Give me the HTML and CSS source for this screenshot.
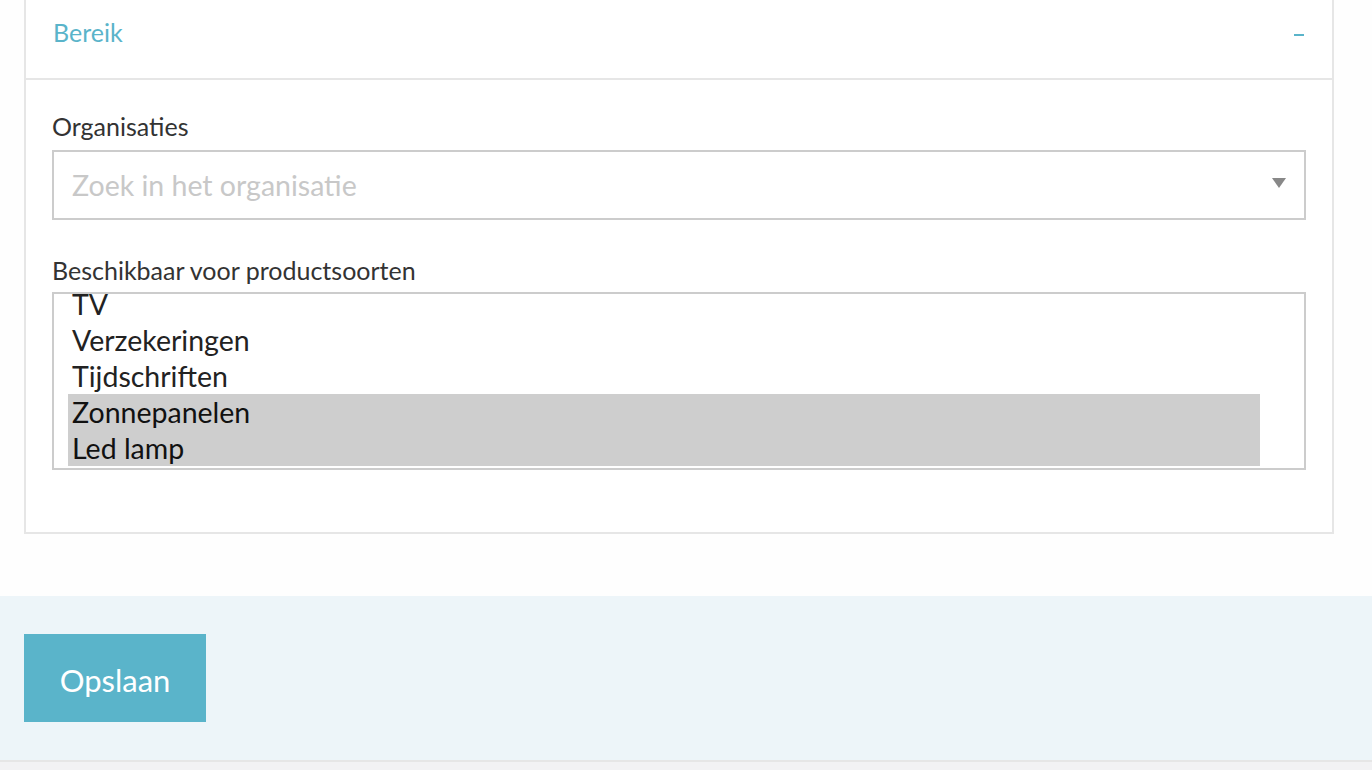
FILE: index.html
```html
<!DOCTYPE html>
<html lang="nl">
<head>
<meta charset="utf-8">
<title>Bereik</title>
<link rel="stylesheet" href="styles.css">
</head>
<body>
<div class="page">
  <section class="panel">
    <div class="panel-header">
      <span class="panel-title">Bereik</span>
      <span class="panel-toggle" aria-hidden="true"></span>
    </div>
    <div class="panel-body">
      <div class="field">
        <label class="field-label">Organisaties</label>
        <div class="select">
          <span class="select-placeholder">Zoek in het organisatie</span>
          <span class="select-arrow"></span>
        </div>
      </div>
      <div class="field">
        <label class="field-label field-label-tight">Beschikbaar voor productsoorten</label>
        <div class="listbox">
          <ul class="listbox-items">
            <li class="option">TV</li>
            <li class="option">Verzekeringen</li>
            <li class="option">Tijdschriften</li>
            <li class="option selected">Zonnepanelen</li>
            <li class="option selected">Led lamp</li>
          </ul>
        </div>
      </div>
    </div>
  </section>
  <div class="actions">
    <button class="btn-save" type="button">Opslaan</button>
  </div>
  <div class="bottom"></div>
</div>
</body>
</html>
```

FILE: styles.css
```css
* { box-sizing: border-box; }
html, body { margin: 0; padding: 0; }
body {
  background: #fefefe;
  font-family: Lato, "Open Sans", "Liberation Sans", sans-serif;
  color: #333;
}
.page { width: 1372px; height: 770px; overflow: hidden; display: flex; flex-direction: column; }

.panel {
  margin: 0 38px 0 24px;
  border: 2px solid #e6e6e6;
  border-top: none;
  background: #fff;
}
.panel-header {
  height: 80px;
  border-bottom: 2px solid #e6e6e6;
  display: flex;
  align-items: flex-start;
  justify-content: space-between;
  padding: 16.5px 28px 0 27px;
}
.panel-title {
  font-size: 25px;
  line-height: 1.2;
  color: #5ab4ca;
}
.panel-toggle {
  width: 10px;
  height: 2px;
  background: #5ab4ca;
  margin-top: 17.5px;
}
.panel-body {
  padding: 31px 26px 62px 26px;
}
.field { display: flex; flex-direction: column; }
.field + .field { margin-top: 35px; }
.field-label {
  font-size: 25px;
  line-height: 1.2;
  color: #333;
  margin-bottom: 9px;
}
.field-label-tight { margin-bottom: 7px; }
.select {
  height: 70px;
  border: 2px solid #ccc;
  display: flex;
  align-items: center;
  justify-content: space-between;
  padding: 0 18px 0 18px;
}
.select-placeholder {
  font-size: 28.5px;
  line-height: 1.2;
  color: #c8c8c8;
}
.select-arrow {
  width: 0; height: 0;
  border-left: 7px solid transparent;
  border-right: 7px solid transparent;
  border-top: 10px solid #888;
  margin-top: -4px;
}
.listbox {
  height: 178px;
  border: 2px solid #ccc;
  overflow: hidden;
  padding: 0 44px 0 14px;
}
.listbox-items {
  list-style: none;
  margin: -8px 0 0 0;
  padding: 0;
}
.option {
  height: 36px;
  line-height: 36px;
  font-size: 28.5px;
  padding-left: 4px;
  color: #222;
}
.option.selected { background: #cecece; color: #111; }

.actions {
  margin-top: 62px;
  background: #edf5f9;
  padding: 38px 24px;
  border-bottom: 2px solid #e6e6e6;
}
.btn-save {
  display: block;
  height: 88px;
  width: 182px;
  border: none;
  border-radius: 0;
  background: #5ab4ca;
  color: #fff;
  font-family: Lato, "Open Sans", "Liberation Sans", sans-serif;
  font-size: 31px;
  padding: 4px 0 0 0;
}
.bottom { flex: 1; background: #f2f2f4; }
```
